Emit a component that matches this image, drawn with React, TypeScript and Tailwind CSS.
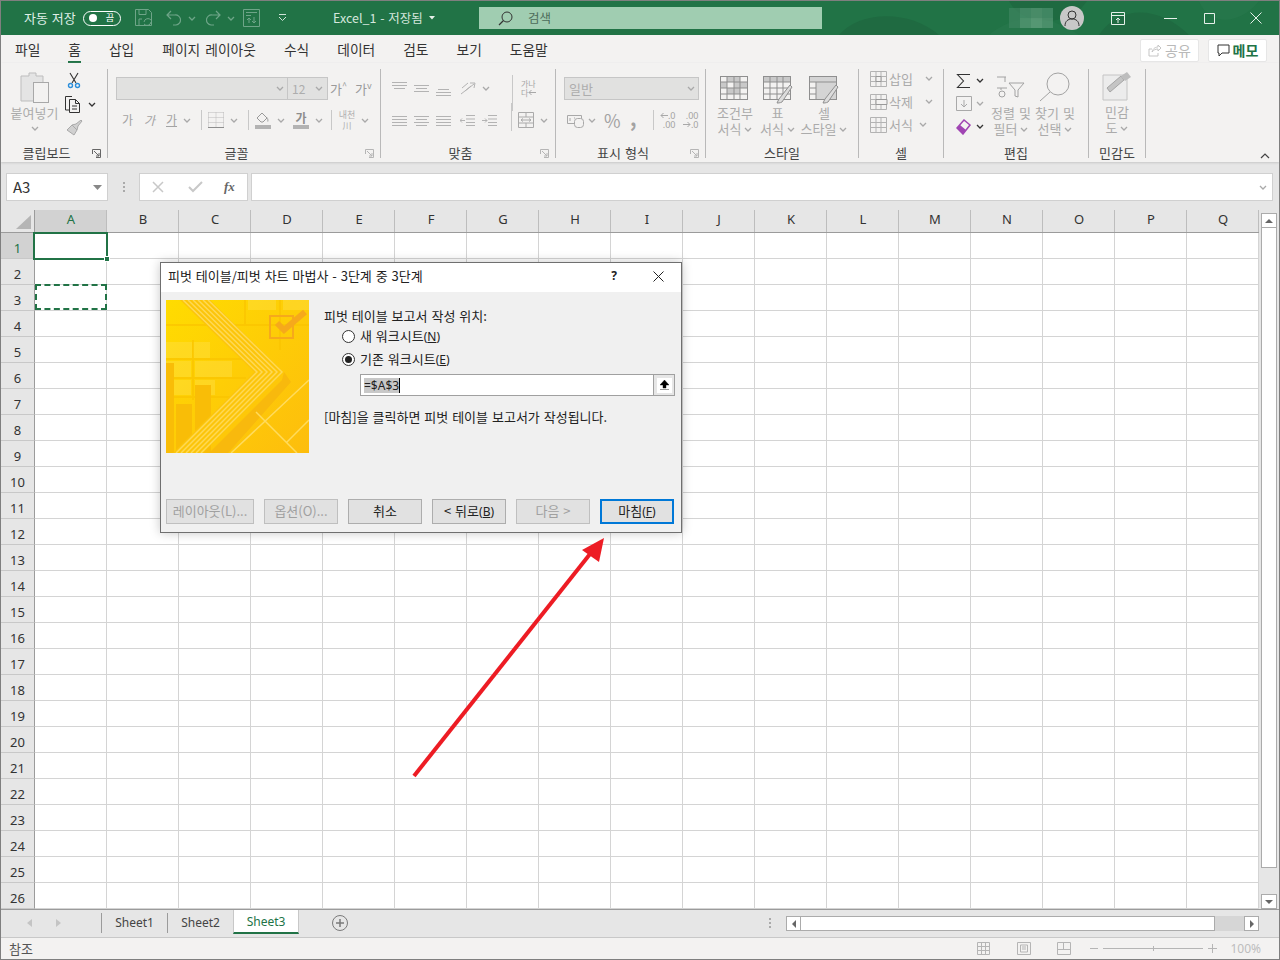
import React from "react";

const G = "#b3b3b3";

function Chev({ c = "#a9a9a9", className = "" }: { c?: string; className?: string }) {
  return (
    <svg width="8" height="5" viewBox="0 0 8 5" className={"shrink-0 " + className}>
      <path d="M1 1l3 3 3-3" stroke={c} strokeWidth="1.3" fill="none" />
    </svg>
  );
}

function Launcher({ c = "#b5b5b5" }: { c?: string }) {
  return (
    <svg width="9" height="9" viewBox="0 0 9 9" className="shrink-0 mt-[2px]">
      <path d="M.5 5V.5h8v8H4M2 2l5 5M7 4v3H4" stroke={c} fill="none" />
    </svg>
  );
}

function Lines({ ys, x1s, w = 15 }: { ys: number[]; x1s: number[]; w?: number }) {
  return (
    <svg width={w} height="15" viewBox={`0 0 ${w} 15`} className="shrink-0">
      {ys.map((y, i) => (
        <path key={i} d={`M${x1s[i]} ${y}.5H${w - x1s[i]}`} stroke={G} />
      ))}
    </svg>
  );
}

function RibbonGroup({
  w,
  label,
  launcher,
  launcherColor,
  children,
}: {
  w: string;
  label: string;
  launcher?: boolean;
  launcherColor?: string;
  children: React.ReactNode;
}) {
  return (
    <div className={`${w} h-[89px] shrink-0 border-r border-[#b9b9b9] flex flex-col`}>
      <div className="h-[76px] shrink-0">{children}</div>
      <div className="flex items-center h-[15px]">
        <div className="flex-1 text-center text-[13px] leading-[15px] text-[#444]">{label}</div>
        {launcher && (
          <div className="w-[15px] flex">
            <Launcher c={launcherColor} />
          </div>
        )}
      </div>
    </div>
  );
}

function BigLabel({ a, b }: { a: string; b: string }) {
  return (
    <div className="flex flex-col items-center text-[13px] leading-[16px] text-[#ababab] whitespace-nowrap">
      <div>{a}</div>
      <div className="flex items-center gap-[3px]">
        {b}
        <Chev />
      </div>
    </div>
  );
}

function TableIcon({ kind }: { kind: number }) {
  return (
    <svg width="30" height="28" viewBox="0 0 30 28" className="shrink-0">
      <rect x=".5" y=".5" width="27" height="23" fill="#f3f2f1" stroke="#8f8f8f" />
      {kind === 0 && (
        <path d="M7 1h13v5H7zM14 6h13v6H14zM1 6h6v6H1zM7 12h13v6H7z" fill="#c9c9c9" />
      )}
      {kind === 1 && <path d="M1 1h26v5H1z" fill="#c9c9c9" />}
      {kind === 2 && <path d="M1 1h26v5H1zM7 6h20v17H7z" fill="#d4d4d4" />}
      {kind !== 2 ? (
        <path d="M7 1v22M14 1v22M20 1v22M1 6h26M1 12h26M1 18h26" stroke="#8f8f8f" />
      ) : (
        <path d="M7 6v17M1 6h26M1 12h6M1 18h6" stroke="#8f8f8f" />
      )}
      {kind !== 0 && (
        <path d="M16 23l11-14 2 2-10 15c-2 1-4 1-5 1 1-1 1-3 2-4z" fill="#dcdcdc" stroke="#8f8f8f" />
      )}
    </svg>
  );
}

function CellRow({ label, icon, chevGap }: { label: string; icon: React.ReactNode; chevGap: string }) {
  return (
    <div className="flex items-center h-[23px] pl-[11px] text-[13px] text-[#ababab]">
      <div className="w-[19px] flex shrink-0">{icon}</div>
      <span className="w-[27px] whitespace-nowrap">{label}</span>
      <Chev className={chevGap} />
    </div>
  );
}

function SmallArrow({ left }: { left?: boolean }) {
  return (
    <svg width="8" height="7" viewBox="0 0 8 7" className="shrink-0">
      <path d={left ? "M8 3.500H1M3.500 1L1 3.500 3.500 6" : "M0 3.500h7M4.500 1L7 3.500 4.500 6"} stroke="#a8a8a8" fill="none" />
    </svg>
  );
}

function Ribbon() {
  const cell = (d: string) => (
    <svg width="18" height="16" viewBox="0 0 18 16">
      <path d="M.5.5h16v15H.5zM.5 5.5h16M.5 10.5h16M6 .5v15M11 .5v15" stroke={G} fill="none" />
      <path d={d} stroke="#999" fill="#f3f2f1" />
    </svg>
  );
  return (
    <div className="flex h-[99px] pt-[6px] bg-[#f3f2f1] shadow-[0_1px_2px_#c8c8c8] relative">
      <RibbonGroup w="w-[107px]" label="클립보드" launcher launcherColor="#666">
        <div className="flex">
          <div className="w-[58px] pl-[9px] flex flex-col items-center">
            <svg width="30" height="32" viewBox="0 0 30 32" className="mt-[3px]">
              <path d="M1 4h8V1h7v3h7v25H1z" fill="#e4e4e4" stroke="#bdbdbd" />
              <rect x="13.5" y="10.5" width="15" height="20" fill="#f3f2f1" stroke="#a8a8a8" />
            </svg>
            <div className="mt-[1px] text-[13px] leading-[16px] text-[#ababab] whitespace-nowrap">붙여넣기</div>
            <Chev className="mt-[5px]" />
          </div>
          <div className="ml-[6px] flex flex-col">
            <svg width="16" height="17" viewBox="0 0 16 17" className="ml-[1px] mt-[3px]">
              <path d="M4 1l6 10M12 1L6 11" stroke="#333" strokeWidth="1.1" />
              <circle cx="4.5" cy="13.5" r="2" fill="none" stroke="#2c8fdb" strokeWidth="1.4" />
              <circle cx="11.5" cy="13.5" r="2" fill="none" stroke="#2c8fdb" strokeWidth="1.4" />
            </svg>
            <div className="flex items-center mt-[7px]">
              <svg width="17" height="17" viewBox="0 0 17 17">
                <path d="M4 14H.5V.5H7M4.5 3.5h6l4 4v9h-10zM10.5 3.5v4h4M7 10h5M7 13h5" stroke="#333" fill="#f3f2f1" />
              </svg>
              <Chev c="#333" className="ml-[6px]" />
            </div>
            <svg width="17" height="16" viewBox="0 0 17 16" className="ml-[1px] mt-[7px]">
              <path d="M1 10l5-5 5 5-3 5zM6 5l4-1 5-4 1 1-4 5-1 4" fill="#d0d0d0" stroke="#a9a9a9" />
            </svg>
          </div>
        </div>
      </RibbonGroup>

      <RibbonGroup w="w-[273px]" label="글꼴" launcher>
        <div className="flex items-center mt-[8px] pl-[8px] h-[23px]">
          <div className="w-[172px] h-[23px] bg-[#e1e1e0] border border-[#c6c6c6] flex items-center justify-end pr-[3px]">
            <Chev />
          </div>
          <div className="w-[40px] h-[23px] bg-[#e1e1e0] border border-[#c6c6c6] border-l-0 flex items-center justify-between px-[4px] text-[12px] text-[#adadad]">
            12
            <Chev />
          </div>
          <span className="ml-[2px] text-[13px] text-[#9a9a9a] whitespace-nowrap">가<sup className="text-[9px]">^</sup></span>
          <span className="ml-[8px] text-[13px] text-[#9a9a9a] whitespace-nowrap">가<sup className="text-[9px]">v</sup></span>
        </div>
        <div className="flex items-center mt-[8px] h-[24px] pl-[14px] text-[12px] text-[#a3a3a3]">
          <span className="w-[22px]">가</span>
          <span className="w-[22px] italic">가</span>
          <span className="underline">가</span>
          <Chev className="ml-[6px]" />
          <div className="ml-[10px] w-px h-[20px] bg-[#c8c8c8]" />
          <svg width="16" height="16" viewBox="0 0 16 16" className="ml-[6px]">
            <path d="M.5.5h15M.5 5.5h15M.5 10.5h15M.5.5v15M8 .5v15M15.5.5v15" stroke="#bbb" strokeDasharray="1 1" fill="none" />
            <path d="M0 15.5h16" stroke="#8d8d8d" />
          </svg>
          <Chev className="ml-[6px]" />
          <div className="ml-[10px] w-px h-[20px] bg-[#c8c8c8]" />
          <svg width="16" height="18" viewBox="0 0 16 18" className="ml-[6px]">
            <path d="M2 7l5-5 5 5-4 4H6z" fill="none" stroke="#999" />
            <path d="M12 6c2 2 2 4 1 5-1 0-1-2-1-5z" fill="#bbb" />
            <rect y="14" width="16" height="4" fill="#b3b3b3" />
          </svg>
          <Chev className="ml-[6px]" />
          <div className="ml-[8px] w-[16px] flex flex-col items-center font-bold text-[#8d8d8d] leading-[14px]">
            가
            <div className="w-[16px] h-[4px] bg-[#b3b3b3]" />
          </div>
          <Chev className="ml-[6px]" />
          <div className="ml-[8px] w-px h-[20px] bg-[#c8c8c8]" />
          <div className="ml-[6px] w-[18px] flex flex-col items-center text-[#b0b0b0] text-[9px] leading-[11px]">
            <span className="whitespace-nowrap">내천</span>
            <span>川</span>
          </div>
          <Chev className="ml-[5px]" />
        </div>
      </RibbonGroup>

      <RibbonGroup w="w-[175px]" label="맞춤" launcher>
        <div className="flex items-center mt-[10px] pl-[11px] h-[18px] gap-[7px]">
          <Lines ys={[1, 4, 7]} x1s={[0, 0, 2]} />
          <Lines ys={[4, 7, 10]} x1s={[0, 2, 0]} />
          <Lines ys={[8, 11, 14]} x1s={[2, 0, 0]} />
          <svg width="17" height="15" viewBox="0 0 17 15" className="ml-[2px]">
            <path d="M1 13L14 3M10 2l5 0-1 5M2 7l6-5M5 10l6-5" stroke={G} fill="none" />
          </svg>
          <Chev className="-ml-[2px]" />
          <div className="ml-[15px] w-px h-[36px] bg-[#c8c8c8] -mb-[10px]" />
          <div className="ml-[1px] w-[18px] flex flex-col text-[8px] leading-[9px] text-[#a5a5a5]">
            <span className="whitespace-nowrap">가나</span>
            <span className="flex items-center whitespace-nowrap">
              다
              <SmallArrow left />
            </span>
          </div>
        </div>
        <div className="flex items-center mt-[14px] pl-[11px] h-[18px] gap-[7px]">
          <Lines ys={[3, 6, 9, 12]} x1s={[0, 0, 0, 0]} />
          <Lines ys={[3, 6, 9, 12]} x1s={[0, 2, 0, 2]} />
          <Lines ys={[3, 6, 9, 12]} x1s={[0, 0, 0, 0]} />
          <svg width="15" height="15" viewBox="0 0 15 15" className="ml-[2px]">
            <path d="M6 2.5h9M6 6h9M6 9.5h9M6 12.5h9M5 7.5H0M2 5.5l-2 2 2 2" stroke={G} fill="none" />
          </svg>
          <svg width="15" height="15" viewBox="0 0 15 15">
            <path d="M6 2.5h9M6 6h9M6 9.5h9M6 12.5h9M0 7.5h5M3 5.5l2 2-2 2" stroke={G} fill="none" />
          </svg>
          <div className="ml-[7px] w-px h-[28px] bg-[#c8c8c8] -mt-[6px]" />
          <svg width="16" height="16" viewBox="0 0 16 16" className="-ml-[1px]">
            <path d="M.5.5h15v15H.5zM.5 5h15M.5 11h15M8 .5V5M8 11v4.500M3 8h10M3 8l2-1.500M3 8l2 1.500M13 8l-2-1.500M13 8l-2 1.500" stroke="#aaa" fill="none" />
          </svg>
          <Chev className="-ml-[1px]" />
        </div>
      </RibbonGroup>

      <RibbonGroup w="w-[150px]" label="표시 형식" launcher>
        <div className="ml-[8px] mt-[8px] w-[135px] h-[23px] bg-[#e1e1e0] border border-[#c6c6c6] flex items-center justify-between pl-[4px] pr-[3px] text-[13px] text-[#adadad]">
          일반
          <Chev />
        </div>
        <div className="flex items-center mt-[8px] h-[24px] pl-[11px] text-[#a3a3a3]">
          <svg width="18" height="15" viewBox="0 0 18 15">
            <path d="M.5 2.500h14v8H.5zM7 5h1M3 5v3M12 5v3" stroke="#a8a8a8" fill="none" />
            <rect x="7.500" y="5.500" width="9" height="9" rx="3" fill="#f3f2f1" stroke="#a8a8a8" />
          </svg>
          <Chev className="ml-[3px]" />
          <span className="ml-[8px] text-[18px] leading-[20px] w-[26px]">%</span>
          <span className="text-[20px] font-bold leading-[20px] -mt-[4px]">,</span>
          <div className="ml-[16px] w-px h-[20px] bg-[#c8c8c8]" />
          <div className="ml-[6px] flex gap-[7px] font-['Noto_Sans',sans-serif] text-[9px] leading-[9px]">
            <div className="w-[16px] flex flex-col items-end">
              <span className="flex items-center whitespace-nowrap">
                <SmallArrow left />
                .0
              </span>
              <span className="whitespace-nowrap">.00</span>
            </div>
            <div className="w-[16px] flex flex-col items-end">
              <span className="whitespace-nowrap">.00</span>
              <span className="flex items-center whitespace-nowrap">
                <SmallArrow />
                .0
              </span>
            </div>
          </div>
        </div>
      </RibbonGroup>

      <RibbonGroup w="w-[153px]" label="스타일">
        <div className="flex pl-[4px] pt-[7px]">
          <div className="w-[50px] flex flex-col items-center">
            <TableIcon kind={0} />
            <div className="mt-[1px]">
              <BigLabel a="조건부" b="서식" />
            </div>
          </div>
          <div className="w-[35px] flex flex-col items-center">
            <TableIcon kind={1} />
            <div className="mt-[1px]">
              <BigLabel a="표" b="서식" />
            </div>
          </div>
          <div className="w-[58px] flex flex-col items-center">
            <TableIcon kind={2} />
            <div className="mt-[1px]">
              <BigLabel a="셀" b="스타일" />
            </div>
          </div>
        </div>
      </RibbonGroup>

      <RibbonGroup w="w-[85px]" label="셀">
        <div className="-mt-[2px]">
          <CellRow label="삽입" icon={cell("M6 5.500h5v5H6z")} chevGap="ml-[9px]" />
          <CellRow label="삭제" icon={cell("M6 5.500h11v5H6z")} chevGap="ml-[9px]" />
          <CellRow label="서식" icon={cell("")} chevGap="ml-[3px]" />
        </div>
      </RibbonGroup>

      <RibbonGroup w="w-[145px]" label="편집">
        <div className="flex">
          <div className="w-[45px] pl-[12px]">
            <div className="flex items-center h-[23px]">
              <svg width="20" height="16" viewBox="0 0 20 16" className="shrink-0">
                <path d="M14 1.500H1.500l6 6.500-6 6.500H14" stroke="#333" strokeWidth="1.100" fill="none" />
              </svg>
              <Chev c="#333" />
            </div>
            <div className="flex items-center h-[23px]">
              <svg width="20" height="16" viewBox="0 0 20 16" className="shrink-0">
                <path d="M.5.500h15v14H.5zM8 4v7M5 8l3 3 3-3" stroke="#a9a9a9" fill="none" />
              </svg>
              <Chev />
            </div>
            <div className="flex items-center h-[23px]">
              <svg width="20" height="16" viewBox="0 0 20 16" className="shrink-0">
                <path d="M1 9l7-8 6 5-7 9z" fill="#f3f2f1" stroke="#a045b3" strokeWidth="1.5" />
                <path d="M1 9l3-3 6 5-3 4z" fill="#a045b3" />
              </svg>
              <Chev c="#333" />
            </div>
          </div>
          <div className="w-[44px] flex flex-col items-center pt-[7px]">
            <svg width="30" height="22" viewBox="0 0 30 22">
              <path d="M1 1h9M9 1v5M1 12h10M5 12v2M13 7h15l-6 7v7l-3-1v-6z" stroke="#a2a2a2" fill="none" />
              <circle cx="6" cy="18" r="3" stroke="#a2a2a2" fill="none" />
            </svg>
            <div className="mt-[7px]">
              <BigLabel a="정렬 및" b="필터" />
            </div>
          </div>
          <div className="w-[44px] flex flex-col items-center pt-[3px]">
            <svg width="32" height="30" viewBox="0 0 32 30">
              <circle cx="19" cy="12" r="11" stroke="#a2a2a2" fill="none" />
              <path d="M11 20L1 29" stroke="#a2a2a2" />
            </svg>
            <div className="mt-[3px]">
              <BigLabel a="찾기 및" b="선택" />
            </div>
          </div>
        </div>
      </RibbonGroup>

      <RibbonGroup w="w-[57px]" label="민감도">
        <div className="flex flex-col items-center pt-[2px]">
          <svg width="30" height="30" viewBox="0 0 30 30">
            <path d="M1 4h24v25H1z" fill="#ececec" stroke="#c4c4c4" />
            <path d="M5 17L19 5l3 4-14 12z" fill="#c4c4c4" stroke="#a5a5a5" />
            <path d="M19 5l6-4 4 5-6 4z" fill="#bdbdbd" />
          </svg>
          <div className="mt-[3px]">
            <BigLabel a="민감" b="도" />
          </div>
        </div>
      </RibbonGroup>

      <div className="flex-1 flex justify-end items-end pb-[3px] pr-[9px]">
        <svg width="10" height="6" viewBox="0 0 10 6">
          <path d="M1 5l4-4 4 4" stroke="#444" strokeWidth="1.200" fill="none" />
        </svg>
      </div>
    </div>
  );
}

function TitleBar() {
  const c = "#6ea588";
  return (
    <div className="h-[34px] bg-[#217346] flex items-center relative overflow-hidden text-[13px] text-[#dfeee6] shrink-0">
      <svg width="480" height="34" viewBox="0 0 480 34" className="absolute right-0 top-0">
        <path d="M40 34C60 10 110 8 140 34zM210 0c10 20 40 28 70 10l8-10zM300 34c20-30 60-30 90 0z" fill="#1f6a41" />
        <path d="M190 34c30-24 60-20 90 0zM400 0c10 25 40 25 60 0z" fill="#2a7a4d" opacity=".5" />
      </svg>
      <div className="flex items-center relative pl-[23px]">
        <span className="w-[52px] whitespace-nowrap">자동 저장</span>
        <div className="ml-[7px] w-[38px] h-[15px] rounded-full border border-white flex items-center justify-between pl-[5px] pr-[6px]">
          <div className="w-[8px] h-[8px] rounded-full bg-white" />
          <span className="text-[9px] leading-[10px] text-white">끔</span>
        </div>
        <svg width="18" height="18" viewBox="0 0 18 18" className="ml-[14px]">
          <path d="M.5.5h13l3 3v13H.5zM4 .5v5h7v-5M4 16v-6h3" stroke={c} fill="none" />
          <path d="M9 13a4 4 0 0 1 7-2M16 13a4 4 0 0 1-7 2" stroke={c} fill="none" />
        </svg>
        <svg width="15" height="17" viewBox="0 0 15 17" className="ml-[13px]">
          <path d="M5 1L1 5l4 4M1 5h8a5 5 0 0 1 1 10H7" stroke={c} strokeWidth="1.200" fill="none" />
        </svg>
        <Chev c={c} className="ml-[7px]" />
        <svg width="15" height="17" viewBox="0 0 15 17" className="ml-[10px]">
          <path d="M10 1l4 4-4 4M14 5H6a5 5 0 0 0-1 10h3" stroke={c} strokeWidth="1.200" fill="none" />
        </svg>
        <Chev c={c} className="ml-[6px]" />
        <svg width="17" height="18" viewBox="0 0 17 18" className="ml-[8px]">
          <path d="M.5.5h16v17H.5zM3 3.500h11M3 6.500h5M11 8v6M9 12l2 2 2-2M6 14V9M4 11l2-2 2 2" stroke={c} fill="none" />
        </svg>
        <svg width="9" height="8" viewBox="0 0 9 8" className="ml-[18px]">
          <path d="M1 .5h7M1 3l3.500 3.500L8 3" stroke="#cfe3d8" fill="none" />
        </svg>
        <span className="ml-[46px] w-[104px] whitespace-nowrap flex items-center gap-[6px] text-[12.500px] text-[#d5e7dd]">
          Excel_1 - 저장됨
          <svg width="6" height="4" viewBox="0 0 6 4">
            <path d="M0 0h6L3 3.500z" fill="#e6f0ea" />
          </svg>
        </span>
        <div className="ml-[42px] w-[343px] h-[22px] bg-[#a0cdb1] flex items-center pl-[19px] text-[#444]">
          <svg width="15" height="15" viewBox="0 0 15 15">
            <circle cx="9" cy="6" r="5" stroke="#333" fill="none" />
            <path d="M5.500 9.500L1 14" stroke="#333" strokeWidth="1.300" />
          </svg>
          <span className="ml-[15px] text-[12.500px] text-[#4c6b5a]">검색</span>
        </div>
      </div>
      <div className="ml-auto flex items-center relative pr-[17px]">
        <div className="w-[44px] h-[20px] grid grid-cols-4 grid-rows-2 opacity-70">
          <div className="bg-[#3e8560]" />
          <div className="bg-[#4e9270]" />
          <div className="bg-[#5a9a78]" />
          <div className="bg-[#4e9270]" />
          <div className="bg-[#3e8560]" />
          <div className="bg-[#5a9a78]" />
          <div className="bg-[#6aa585]" />
          <div className="bg-[#5a9a78]" />
        </div>
        <div className="ml-[7px] w-[24px] h-[24px] rounded-full bg-[#c8c8c8] flex items-center justify-center">
          <svg width="16" height="18" viewBox="0 0 16 18">
            <circle cx="8" cy="6" r="4" stroke="#333" fill="none" />
            <path d="M1 17c0-5 3-7 7-7s7 2 7 7" stroke="#333" fill="none" />
          </svg>
        </div>
        <svg width="14" height="13" viewBox="0 0 14 13" className="ml-[27px]">
          <path d="M.5.500h13v12H.5zM.5 3.500h13M7 11V6M5 8l2-2 2 2" stroke="#e6f0ea" fill="none" />
        </svg>
        <svg width="13" height="11" viewBox="0 0 13 11" className="ml-[39px]">
          <path d="M0 5.500h13" stroke="#e6f0ea" />
        </svg>
        <svg width="11" height="11" viewBox="0 0 11 11" className="ml-[27px]">
          <path d="M.5.500h10v10H.5z" stroke="#e6f0ea" fill="none" />
        </svg>
        <svg width="12" height="12" viewBox="0 0 12 12" className="ml-[35px]">
          <path d="M.5.500l11 11M11.500.500l-11 11" stroke="#e6f0ea" />
        </svg>
      </div>
    </div>
  );
}

function Tabs() {
  const tabs = ["파일", "홈", "삽입", "페이지 레이아웃", "수식", "데이터", "검토", "보기", "도움말"];
  return (
    <div className="h-[28px] bg-[#f3f2f1] flex items-center pl-[14px] gap-[28px] text-[13.750px] text-[#333] shrink-0 [word-spacing:2px]">
      {tabs.map((t, i) => (
        <div key={t} className="relative whitespace-nowrap">
          {t}
          {i === 1 && <div className="absolute left-0 right-0 -bottom-[5px] h-[3px] bg-[#217346]" />}
        </div>
      ))}
      <div className="ml-auto flex items-center gap-[9px] pr-[12px] mt-[2px] text-[14px]">
        <div className="w-[59px] h-[23px] bg-white border border-[#e6e6e6] rounded-[2px] flex items-center justify-center gap-[3px] text-[#b9b9b9]">
          <svg width="14" height="14" viewBox="0 0 14 14">
            <path d="M4 6H1v7h9v-3M4 9c1-4 4-5 6-5V2l3 3-3 3V6c-3 0-4 1-6 3z" stroke="#c5c5c5" fill="none" />
          </svg>
          공유
        </div>
        <div className="w-[59px] h-[23px] bg-white border border-[#e6e6e6] rounded-[2px] flex items-center justify-center gap-[3px] font-bold text-[#217346]">
          <svg width="13" height="13" viewBox="0 0 13 13">
            <path d="M1 1h11v8H5l-3 3V9H1z" stroke="#333" fill="none" />
          </svg>
          메모
        </div>
      </div>
    </div>
  );
}

function FormulaBar() {
  return (
    <div className="h-[48px] bg-[#e6e6e6] flex shrink-0 pt-[11px] pl-[5px]">
      <div className="w-[102px] h-[28px] bg-white border border-[#d0d0d0] flex items-center justify-between pl-[6px] pr-[5px] text-[15px] text-[#333]">
        A3
        <svg width="9" height="5" viewBox="0 0 9 5">
          <path d="M0 0h9L4.500 5z" fill="#888" />
        </svg>
      </div>
      <div className="w-[31px] flex flex-col items-center justify-center gap-[2px] h-[28px]">
        <div className="w-[2px] h-[2px] bg-[#aaa]" />
        <div className="w-[2px] h-[2px] bg-[#aaa]" />
        <div className="w-[2px] h-[2px] bg-[#aaa]" />
      </div>
      <div className="w-[109px] h-[28px] bg-white border border-[#d0d0d0] flex items-center pl-[12px]">
        <svg width="12" height="12" viewBox="0 0 12 12">
          <path d="M1 1l10 10M11 1L1 11" stroke="#c8c8c8" strokeWidth="1.500" />
        </svg>
        <svg width="15" height="12" viewBox="0 0 15 12" className="ml-[24px]">
          <path d="M1 6l4 4 9-9" stroke="#c8c8c8" strokeWidth="2" fill="none" />
        </svg>
        <span className="ml-[21px] font-['Liberation_Serif',serif] italic font-bold text-[13px] text-[#666]">
          fx
        </span>
      </div>
      <div className="ml-[3px] w-[1022px] h-[28px] bg-white border border-[#d0d0d0] flex items-center justify-end pr-[5px]">
        <Chev />
      </div>
    </div>
  );
}

const COLS = "ABCDEFGHIJKLMNOPQ".split("");
const ROWS = Array.from({ length: 26 }, (_, i) => i + 1);

function Sheet() {
  return (
    <div className="flex bg-[#e6e6e6] shrink-0">
      <div className="w-[1258px] font-['Noto_Sans',sans-serif] relative">
        <div className="flex h-[23px] border-b border-[#9b9b9b]">
          <div className="w-[34px] border-r border-[#9b9b9b] shrink-0 flex items-end justify-end pr-[3px] pb-[3px]">
            <svg width="15" height="14" viewBox="0 0 15 14">
              <path d="M15 0v14H0z" fill="#b5b5b5" />
            </svg>
          </div>
          {COLS.map((c, i) => (
            <div
              key={c}
              className={
                "w-[72px] shrink-0 flex items-center justify-center pl-[1px] pb-[2px] text-[13px] border-r border-[#bdbdbd] " +
                (i === 0 ? "bg-[#d2d2d2] text-[#217346]" : "text-[#333]")
              }
            >
              {c}
            </div>
          ))}
        </div>
        {ROWS.map((r) => (
          <div key={r} className="flex h-[26px]">
            <div
              className={
                "w-[34px] shrink-0 border-r border-b border-r-[#9b9b9b] border-b-[#c8c8c8] flex items-center justify-center pt-[6px] text-[13px] " +
                (r === 1 ? "bg-[#d2d2d2] text-[#217346]" : "text-[#333]")
              }
            >
              {r}
            </div>
            {COLS.map((c) => (
              <div key={c} className="w-[72px] shrink-0 bg-white border-r border-b border-[#d4d4d4]" />
            ))}
          </div>
        ))}
        <div className="absolute left-[32px] top-[22px] w-[75px] h-[28px] border-2 border-[#217346]" />
        <div className="absolute left-[103px] top-[46px] w-[6px] h-[6px] bg-[#217346] border border-white" />
        <div className="absolute left-[34px] top-[74px] w-[72px] h-[26px] border-2 border-dashed border-[#217346]" />
      </div>
      <div className="w-[20px] shrink-0 pl-[2px] pt-[3px] flex flex-col">
        <div className="w-[16px] h-[15px] bg-white border border-[#ababab] flex items-center justify-center">
          <svg width="8" height="4" viewBox="0 0 8 4">
            <path d="M0 4h8L4 0z" fill="#666" />
          </svg>
        </div>
        <div className="w-[16px] h-[640px] bg-white border-x border-b border-[#ababab]" />
        <div className="w-[16px] flex-1" />
        <div className="w-[16px] h-[15px] bg-white border border-[#ababab] flex items-center justify-center">
          <svg width="8" height="4" viewBox="0 0 8 4">
            <path d="M0 0h8L4 4z" fill="#666" />
          </svg>
        </div>
      </div>
    </div>
  );
}

function SheetTabs() {
  return (
    <div className="h-[28px] bg-[#e6e6e6] border-t border-[#9b9b9b] flex items-start shrink-0 font-['Noto_Sans',sans-serif] text-[12px] text-[#444]">
      <div className="flex items-center h-[26px] pl-[26px] w-[100px] shrink-0">
        <svg width="5" height="8" viewBox="0 0 5 8">
          <path d="M5 0v8L0 4z" fill="#c4c4c4" />
        </svg>
        <svg width="5" height="8" viewBox="0 0 5 8" className="ml-[24px]">
          <path d="M0 0v8l5-4z" fill="#c4c4c4" />
        </svg>
      </div>
      <div className="w-[66px] h-[20px] mt-[3px] border-l border-[#9b9b9b] flex items-center justify-center shrink-0">Sheet1</div>
      <div className="w-[66px] h-[20px] mt-[3px] border-l border-[#9b9b9b] flex items-center justify-center shrink-0">Sheet2</div>
      <div className="w-[66px] h-[24px] pt-[1px] bg-white border-x border-[#c8c8c8] border-b-2 border-b-[#217346] flex items-center justify-center text-[#217346] shrink-0">
        Sheet3
      </div>
      <svg width="16" height="16" viewBox="0 0 16 16" className="ml-[33px] mt-[5px]">
        <circle cx="8" cy="8" r="7.500" fill="none" stroke="#7a7a7a" />
        <path d="M4 8h8M8 4v8" stroke="#7a7a7a" strokeWidth="1.500" />
      </svg>
      <div className="ml-[421px] h-[26px] flex flex-col items-center justify-center gap-[2px]">
        <div className="w-[2px] h-[2px] bg-[#aaa]" />
        <div className="w-[2px] h-[2px] bg-[#aaa]" />
        <div className="w-[2px] h-[2px] bg-[#aaa]" />
      </div>
      <div className="ml-[15px] mt-[6px] flex h-[15px] w-[473px]">
        <div className="w-[15px] bg-white border border-[#ababab] flex items-center justify-center">
          <svg width="4" height="8" viewBox="0 0 4 8">
            <path d="M4 0v8L0 4z" fill="#666" />
          </svg>
        </div>
        <div className="w-[414px] bg-white border-y border-r border-[#ababab]" />
        <div className="flex-1 bg-[#d6d6d6]" />
        <div className="w-[15px] bg-white border border-[#ababab] flex items-center justify-center">
          <svg width="4" height="8" viewBox="0 0 4 8">
            <path d="M0 0v8l4-4z" fill="#666" />
          </svg>
        </div>
      </div>
    </div>
  );
}

function StatusBar() {
  return (
    <div className="flex-1 bg-[#f3f2f1] border-t border-[#c8c8c8] flex items-center pl-[8px] pr-[18px] text-[13px] text-[#555]">
      <span>참조</span>
      <div className="ml-auto flex items-center text-[#bdbdbd] font-['Noto_Sans',sans-serif]">
        <svg width="13" height="13" viewBox="0 0 13 13">
          <path d="M.5.500h12v12H.5zM.5 4.500h12M.5 8.500h12M4.500.500v12M8.500.500v12" stroke="#b5b5b5" fill="none" />
        </svg>
        <svg width="14" height="13" viewBox="0 0 14 13" className="ml-[27px]">
          <path d="M.5.500h13v12H.5zM3.500 3h7v7h-7zM5 5h4M5 7h4" stroke="#b5b5b5" fill="none" />
        </svg>
        <svg width="14" height="13" viewBox="0 0 14 13" className="ml-[26px]">
          <path d="M.5.500h13v12H.5zM.5 7.500h13M6.500.500v7" stroke="#b5b5b5" fill="none" />
        </svg>
        <div className="ml-[19px] w-[8px] h-px bg-[#b5b5b5]" />
        <div className="ml-[5px] w-[100px] h-px bg-[#b5b5b5] relative">
          <div className="absolute left-[50px] -top-[2px] w-px h-[5px] bg-[#b5b5b5]" />
        </div>
        <svg width="9" height="9" viewBox="0 0 9 9" className="ml-[5px]">
          <path d="M0 4.500h9M4.500 0v9" stroke="#b5b5b5" />
        </svg>
        <span className="ml-[13px] text-[12px]">100%</span>
      </div>
    </div>
  );
}

function Accel({ t }: { t: string }) {
  return <span className="font-['Noto_Sans',sans-serif] text-[12px]">(<span className="underline">{t}</span>)</span>;
}

function DlgButton({
  w,
  children,
  disabled,
  primary,
}: {
  w: string;
  children: React.ReactNode;
  disabled?: boolean;
  primary?: boolean;
}) {
  return (
    <div
      className={
        `${w} h-[25px] pb-[2px] shrink-0 flex items-center justify-center bg-[#e1e1e1] whitespace-nowrap ` +
        (primary ? "border-2 border-[#0078d7] " : "border border-[#adadad] ") +
        (disabled ? "text-[#a0a0a0] border-[#bfbfbf]" : "text-[#222]")
      }
    >
      <span>{children}</span>
    </div>
  );
}

function WizardArt() {
  const stripes = [0, 1, 2, 3, 4, 5];
  return (
    <svg width="143" height="153" viewBox="0 0 143 153" className="shrink-0">
      <defs>
        <linearGradient id="wiz" x1="0" y1="0" x2="1" y2="1">
          <stop offset="0" stopColor="#ffdc00" />
          <stop offset="1" stopColor="#fdbd0d" />
        </linearGradient>
      </defs>
      <rect width="143" height="153" fill="url(#wiz)" />
      <g fill="#ffe14d" opacity=".4">
        <rect x="82" y="0" width="28" height="10" />
        <rect x="117" y="0" width="26" height="10" />
        <rect x="0" y="42" width="26" height="16" />
        <rect x="27" y="42" width="17" height="16" />
        <rect x="0" y="61" width="25" height="16" />
        <rect x="29" y="61" width="37" height="16" />
        <rect x="0" y="80" width="25" height="15" />
        <rect x="29" y="80" width="20" height="15" />
      </g>
      <path d="M0 25h143M0 59h90M0 78h80M0 97h70M79 0v25M114 0v50M27 40v60" stroke="#fbc400" strokeWidth="2" opacity=".7" />
      <rect x="0" y="63" width="8" height="90" fill="#f9bd07" />
      <rect x="10" y="104" width="16" height="49" fill="#f9bd07" />
      <rect x="29" y="85" width="16" height="68" fill="#f9bd07" />
      <path d="M116 80L43 153H62L125 82 118 72z" fill="#f8b90d" />
      <path d="M14 0H44L117 72 37 153H7L88 72z" fill="#fcc50a" />
      {stripes.map((i) => (
        <path
          key={i}
          d={`M${17 + i * 5} 0L${91 + i * 5} 72L${10 + i * 5} 153`}
          stroke="#ffdd66"
          strokeWidth="1.500"
          fill="none"
          opacity=".8"
        />
      ))}
      <path d="M90 112l41 41M65 153l78-73M120 143l23-23" stroke="#ffdb5c" strokeWidth="1.500" fill="none" />
      <rect x="104" y="16" width="23" height="22" fill="none" stroke="#f6a91b" strokeWidth="2" />
      <path d="M111 23l7 7 21-18" fill="none" stroke="#f6a91b" strokeWidth="6" />
    </svg>
  );
}

function Dialog() {
  return (
    <div className="absolute left-[159px] top-[261px] w-[522px] h-[271px] border border-[#6f6f6f] bg-[#f0f0f0] shadow-[0_0_10px_rgba(0,0,0,0.22)] flex flex-col text-[13px] text-[#222] [word-spacing:1px]">
      <div className="h-[29px] pb-[3px] bg-white flex items-center pl-[7px] shrink-0">
        <span className="whitespace-nowrap">피벗 테이블/피벗 차트 마법사 - 3단계 중 3단계</span>
        <span className="ml-auto font-['Noto_Sans',sans-serif] font-bold text-[12px]">?</span>
        <svg width="11" height="11" viewBox="0 0 11 11" className="ml-[36px] mr-[17px]">
          <path d="M.5.500l10 10M10.500.500l-10 10" stroke="#222" />
        </svg>
      </div>
      <div className="flex pl-[5px] pt-[8px]">
        <WizardArt />
        <div className="ml-[15px] flex flex-col leading-[16px]">
          <div className="mt-[8px] whitespace-nowrap">피벗 테이블 보고서 작성 위치:</div>
          <div className="flex items-center mt-[4px] pl-[18px] h-[17px]">
            <div className="w-[13px] h-[13px] rounded-full border border-[#333] bg-white" />
            <span className="ml-[5px] whitespace-nowrap">새 워크시트<Accel t="N" /></span>
          </div>
          <div className="flex items-center mt-[6px] pl-[18px] h-[17px]">
            <div className="w-[13px] h-[13px] rounded-full border border-[#333] bg-white flex items-center justify-center">
              <div className="w-[7px] h-[7px] rounded-full bg-[#222]" />
            </div>
            <span className="ml-[5px] whitespace-nowrap">기존 워크시트<Accel t="E" /></span>
          </div>
          <div className="ml-[36px] mt-[6px] w-[315px] h-[22px] border border-[#a0a0a0] bg-white flex items-center">
            <span className="ml-[3px] bg-[#c8c8c8] font-['Noto_Sans',sans-serif] leading-[15px] border-r border-black text-[12px]">=$A$3</span>
            <div className="ml-auto w-[21px] h-full bg-[#e6e6e6] border-l border-[#a0a0a0] flex items-center justify-center">
              <div className="w-[15px] h-[15px] bg-white flex items-center justify-center">
                <svg width="9" height="11" viewBox="0 0 9 11">
                  <path d="M4.500 0L9 5H6v3H3V5H0zM0 9.500h9" fill="#000" stroke="#000" strokeWidth=".4" />
                </svg>
              </div>
            </div>
          </div>
          <div className="mt-[13px] whitespace-nowrap">[마침]을 클릭하면 피벗 테이블 보고서가 작성됩니다.</div>
        </div>
      </div>
      <div className="mt-auto flex gap-[10px] pl-[5px] pb-[8px]">
        <DlgButton w="w-[88px]" disabled>레이아웃(L)...</DlgButton>
        <DlgButton w="w-[74px]" disabled>옵션(O)...</DlgButton>
        <DlgButton w="w-[74px]">취소</DlgButton>
        <DlgButton w="w-[74px]">&lt; 뒤로<Accel t="B" /></DlgButton>
        <DlgButton w="w-[74px]" disabled>다음 &gt;</DlgButton>
        <DlgButton w="w-[74px]" primary>마침<Accel t="F" /></DlgButton>
      </div>
    </div>
  );
}

function Arrow() {
  return (
    <svg width="220" height="260" viewBox="0 0 220 260" className="absolute left-[399px] top-[529px] pointer-events-none">
      <path d="M14 246L190 24" stroke="#ed1c24" strokeWidth="4" />
      <path d="M204 8L182 20 199 32z" fill="#ed1c24" />
    </svg>
  );
}

export default function App() {
  return (
    <div className="w-[1280px] h-[960px] relative overflow-hidden border border-[#7f7f7f] flex flex-col bg-[#e6e6e6] font-['Noto_Sans_CJK_KR','Noto_Sans',sans-serif] [word-spacing:1px]">
      <TitleBar />
      <Tabs />
      <Ribbon />
      <FormulaBar />
      <Sheet />
      <SheetTabs />
      <StatusBar />
      <Dialog />
      <Arrow />
    </div>
  );
}
